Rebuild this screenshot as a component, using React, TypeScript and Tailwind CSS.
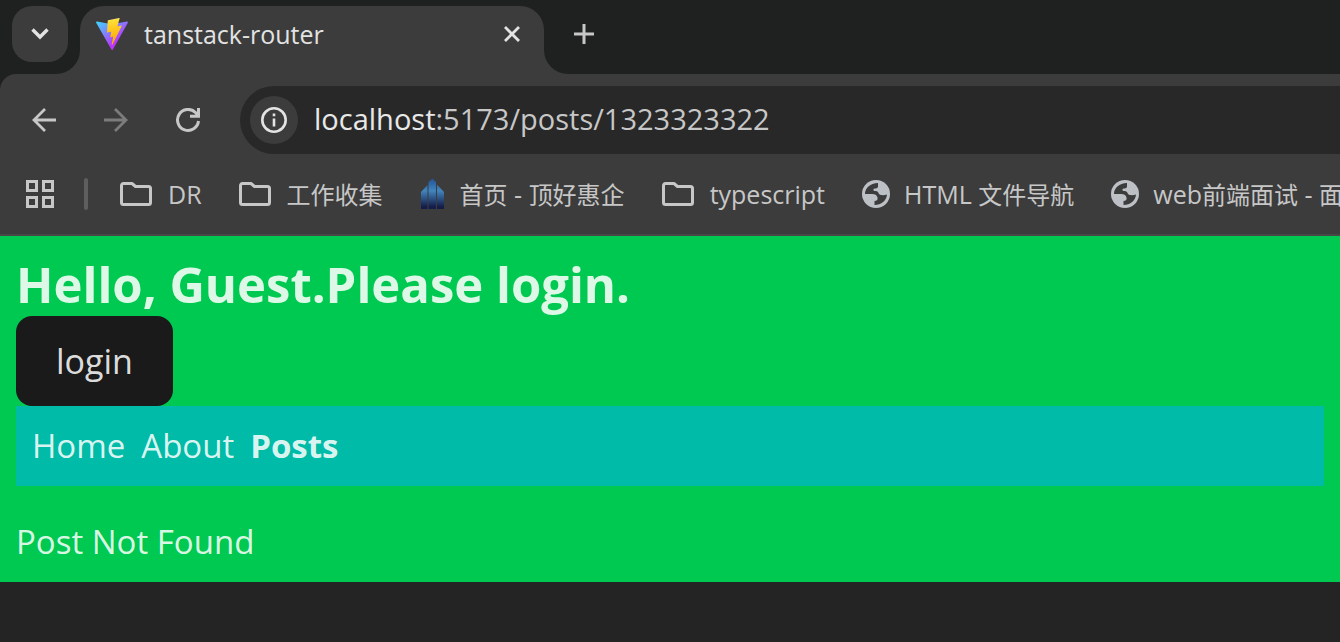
import { useState } from 'react';

const FolderIcon = () => (
  <svg width="32" height="24" viewBox="0 0 32 24" fill="none" stroke="#c7c7c7" strokeWidth="3" strokeLinejoin="round">
    <path d="M1.5 3.500V20.500a2 2 0 0 0 2 2h25a2 2 0 0 0 2-2v-14a2 2 0 0 0-2-2H15.500L12 1.500H3.500a2 2 0 0 0-2 2z" />
  </svg>
);

const GlobeIcon = () => (
  <svg width="28" height="28" viewBox="0 0 28 28">
    <circle cx="14" cy="14" r="14" fill="#bdc1c6" />
    <path d="M3 13C3.500 8 8 3.500 16 3V6.500C16 8 14.500 8.500 12.500 8.500C11 9 11 10.800 12.500 11C15.500 10.500 16.500 12 17 14C18.500 15.500 22 15.500 25 14.500C24.500 20.500 19.500 25 12.500 25V21C15 21 16 19.500 15.500 17.500C15 15 13 14 10 14H3z" fill="#3c3c3c" />
  </svg>
);

const TowerIcon = () => (
  <svg width="24" height="32" viewBox="0 0 24 32">
    <defs>
      <linearGradient id="tower" x1="0" y1="0" x2="0" y2="32" gradientUnits="userSpaceOnUse">
        <stop offset="0" stopColor="#234f93" />
        <stop offset="0.4" stopColor="#4285bd" />
        <stop offset="0.9" stopColor="#141c48" />
      </linearGradient>
    </defs>
    <path d="M1 31V14l6.500-7v24zM8.500 31V4L12.500 .500l3.500 3.500v27zM17 31V6.500l7 7.500v17z" fill="url(#tower)" />
  </svg>
);

const ViteIcon = () => (
  <svg width="32" height="32" viewBox="0 0 256 257">
    <defs>
      <linearGradient id="vite-a" x1="-.828%" x2="57.636%" y1="7.652%" y2="78.411%">
        <stop offset="0%" stopColor="#41D1FF" />
        <stop offset="100%" stopColor="#BD34FE" />
      </linearGradient>
      <linearGradient id="vite-b" x1="43.376%" x2="50.316%" y1="2.242%" y2="89.030%">
        <stop offset="0%" stopColor="#FFEA83" />
        <stop offset="8.333%" stopColor="#FFDD35" />
        <stop offset="100%" stopColor="#FFA800" />
      </linearGradient>
    </defs>
    <path fill="url(#vite-a)" d="M255.153 37.938L134.897 252.976c-2.483 4.440-8.862 4.466-11.382.048L.875 37.958c-2.746-4.814 1.371-10.646 6.827-9.670l120.385 21.517a6.537 6.537 0 0 0 2.322-.004l117.867-21.483c5.438-.991 9.574 4.796 6.877 9.620Z" />
    <path fill="url(#vite-b)" d="M185.432.063L96.440 17.501a3.268 3.268 0 0 0-2.634 3.014l-5.474 92.456a3.268 3.268 0 0 0 3.997 3.378l24.777-5.718c2.318-.535 4.413 1.507 3.936 3.838l-7.361 36.047c-.495 2.426 1.782 4.500 4.151 3.780l15.304-4.649c2.372-.720 4.652 1.360 4.150 3.788l-11.698 56.621c-.732 3.542 3.979 5.473 5.943 2.437l1.313-2.028l72.516-144.720c1.215-2.423-.880-5.186-3.540-4.672l-25.505 4.922c-2.396.462-4.435-1.770-3.759-4.114l16.646-57.705c.677-2.350-1.370-4.583-3.769-4.113Z" />
  </svg>
);

const bookmarks = [
  { title: 'DR', icon: <FolderIcon />, gap: 'gap-4' },
  { title: '工作收集', icon: <FolderIcon />, gap: 'gap-4' },
  { title: '首页 - 顶好惠企', icon: <TowerIcon />, gap: 'gap-4' },
  { title: 'typescript', icon: <FolderIcon />, gap: 'gap-4' },
  { title: 'HTML 文件导航', icon: <GlobeIcon />, gap: 'gap-3.5' },
  { title: 'web前端面试 - 面', icon: <GlobeIcon />, gap: 'gap-3.5' },
];

// Chinese runs are set a step smaller than the Latin ones
const BookmarkTitle = ({ title }: { title: string }) => (
  <span className="pt-0.5">
    {title.split(/([\u4e00-\u9fff]+)/).map((run, index) => (
      index % 2 === 1 ? <span key={index} className="text-[24px]">{run}</span> : run
    ))}
  </span>
);

const TabStrip = () => (
  <div className="flex h-[74px] bg-[#3c3c3c]">
    <div className="w-20 shrink-0 rounded-br-3xl bg-[#1f2120] pt-1.5 pl-3">
      <button type="button" aria-label="Search tabs" className="flex size-14 items-center justify-center rounded-[20px] bg-[#3c3c3c]">
        <svg width="18" height="12" viewBox="0 0 18 12" fill="none" stroke="#e3e3e3" strokeWidth="3.400">
          <path d="M1.500 1.500L9 9l7.500-7.500" />
        </svg>
      </button>
    </div>
    <div className="w-[464px] bg-linear-to-b from-[#1f2120] from-50% to-[#3c3c3c] to-50% pt-1.5">
      <div className="flex h-full items-start rounded-t-3xl bg-[#3c3c3c] pr-6 pl-4">
        <div className="flex h-14 flex-1 items-center gap-4">
          <ViteIcon />
          <span className="pt-0.5 text-[25px] text-[#e3e3e3]">tanstack-router</span>
        </div>
        <button type="button" aria-label="Close tab" className="flex h-14 items-center">
          <svg width="16" height="16" viewBox="0 0 16 16" stroke="#e3e3e3" strokeWidth="2.800">
            <path d="M1 1l14 14M15 1L1 15" />
          </svg>
        </button>
      </div>
    </div>
    <div className="flex-1 rounded-bl-3xl bg-[#1f2120] pt-1.5 pl-[30px]">
      <button type="button" aria-label="New tab" className="flex h-14 items-center">
        <svg width="20" height="20" viewBox="0 0 20 20" stroke="#c7c7c7" strokeWidth="3">
          <path d="M10 0v20M0 10h20" />
        </svg>
      </button>
    </div>
  </div>
);

const Toolbar = () => {
  const [path, setPath] = useState(':5173/posts/1323323322');

  return (
    <div className="flex items-center pt-3 pl-8">
      <div className="flex shrink-0 items-center gap-12 pr-10">
        <button type="button" aria-label="Back">
          <svg width="24" height="24" viewBox="0 0 24 24" fill="none" stroke="#c7c7c7" strokeWidth="2.800">
            <path d="M24 12H2M13 1L2 12l11 11" />
          </svg>
        </button>
        <button type="button" aria-label="Forward">
          <svg width="24" height="24" viewBox="0 0 24 24" fill="none" stroke="#7c7c7c" strokeWidth="2.800">
            <path d="M0 12h22M11 1l11 11-11 11" />
          </svg>
        </button>
        <button type="button" aria-label="Reload">
          <svg width="24" height="24" viewBox="0 0 24 24" fill="none" stroke="#c7c7c7" strokeWidth="3">
            <path d="M22.500 13A10.500 10.500 0 1 1 19.500 4.500L22 7.500M22.500 0v8.300H14" />
          </svg>
        </button>
      </div>
      <div className="flex h-[68px] flex-1 items-center rounded-l-full bg-[#282828] pl-2.5 text-[29px]">
        <button type="button" aria-label="Site information" className="mr-4 flex size-12 shrink-0 items-center justify-center rounded-full bg-[#3c3c3c]">
          <svg width="26" height="26" viewBox="0 0 26 26" fill="none" stroke="#e3e3e3" strokeWidth="2.600">
            <circle cx="13" cy="13" r="11.700" />
            <path d="M13 11.500v8M13 6.500v2.800" />
          </svg>
        </button>
        <div className="flex flex-1 pb-0.5">
          <label htmlFor="address" className="text-[#e8e8e8]">localhost</label>
          <input
            id="address"
            value={path}
            onChange={(e) => setPath(e.target.value)}
            className="min-w-0 flex-1 bg-transparent text-[#c7c7c7] outline-none"
          />
        </div>
      </div>
    </div>
  );
};

const BookmarksBar = () => (
  <div className="flex h-20 items-center overflow-hidden pl-[26px] text-[25px] text-[#c7c7c7]">
    <button type="button" aria-label="Apps" className="shrink-0">
      <svg width="28" height="28" viewBox="0 0 28 28" fill="none" stroke="#c7c7c7" strokeWidth="3">
        <path d="M1.500 1.500h9v9h-9zM17.500 1.500h9v9h-9zM1.500 17.500h9v9h-9zM17.500 17.500h9v9h-9z" />
      </svg>
    </button>
    <div className="mr-8 ml-[30px] h-8 w-1 shrink-0 rounded-full bg-[#5e5e5e]"></div>
    <div className="flex gap-[37px]">
      {bookmarks.map((bookmark) => (
        <a key={bookmark.title} href="#" className={`flex shrink-0 items-center whitespace-nowrap ${bookmark.gap}`}>
          {bookmark.icon}
          <BookmarkTitle title={bookmark.title} />
        </a>
      ))}
    </div>
  </div>
);

const App = () => {
  return (
    <div className="min-h-screen overflow-hidden bg-[#242424] font-['Open_Sans','Noto_Sans_CJK_SC',sans-serif]">
      <header className="bg-[#1f2120]">
        <TabStrip />
        <div className="rounded-tl-2xl border-b-2 border-[#474747] bg-[#3c3c3c]">
          <Toolbar />
          <BookmarksBar />
        </div>
      </header>
      <main className="bg-green-500 p-4 text-[33px] leading-12 text-white/87">
        <h1 className="text-[49px] leading-16 font-bold">Hello, Guest.Please login.</h1>
        <button type="button" className="flex h-[90px] items-center rounded-2xl bg-[#1a1a1a] px-10 text-[34px]">
          login
        </button>
        <nav className="flex gap-4 bg-teal-500 p-4">
          <a href="#">Home</a>
          <a href="#">About</a>
          <a href="#" className="font-bold">Posts</a>
        </nav>
        <p className="pt-8">Post Not Found</p>
      </main>
    </div>
  );
};

export default App;
